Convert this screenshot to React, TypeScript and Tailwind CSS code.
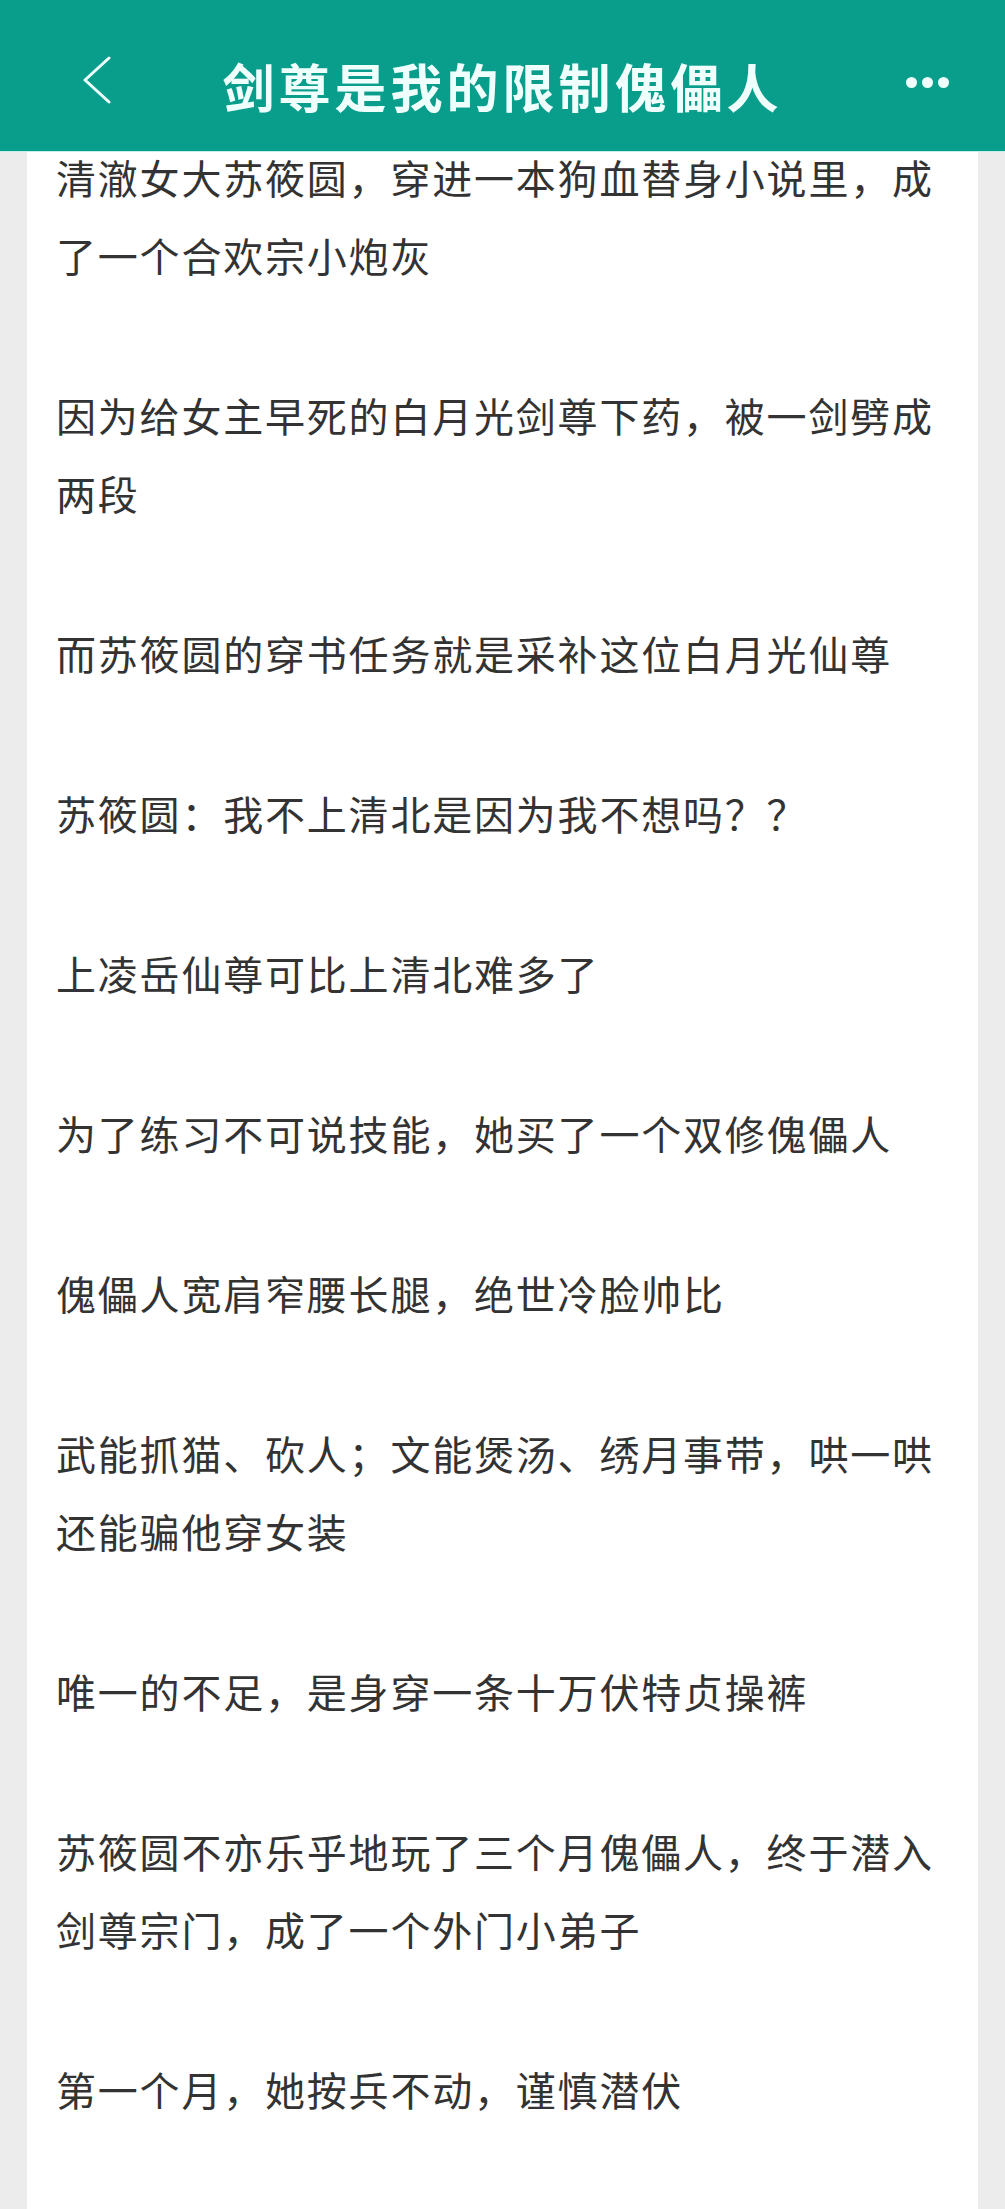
const paragraphs: string[][] = [
  ['清澈女大苏筱圆，穿进一本狗血替身小说里，成', '了一个合欢宗小炮灰'],
  ['因为给女主早死的白月光剑尊下药，被一剑劈成', '两段'],
  ['而苏筱圆的穿书任务就是采补这位白月光仙尊'],
  ['苏筱圆：我不上清北是因为我不想吗？？'],
  ['上凌岳仙尊可比上清北难多了'],
  ['为了练习不可说技能，她买了一个双修傀儡人'],
  ['傀儡人宽肩窄腰长腿，绝世冷脸帅比'],
  ['武能抓猫、砍人；文能煲汤、绣月事带，哄一哄', '还能骗他穿女装'],
  ['唯一的不足，是身穿一条十万伏特贞操裤'],
  ['苏筱圆不亦乐乎地玩了三个月傀儡人，终于潜入', '剑尊宗门，成了一个外门小弟子'],
  ['第一个月，她按兵不动，谨慎潜伏'],
];

function Header() {
  return (
    <div className="fixed top-0 inset-x-0 z-10 h-[152px] bg-[#099e8c] border-b border-[#c4f0e9] grid grid-cols-[1fr_auto_1fr] items-center pt-[20px]">
      <div className="flex pl-[82px] -mt-[12px]">
        <svg width="30" height="48" viewBox="0 0 30 48" fill="none">
          <path d="M27 2 L3 24 L27 46" stroke="#effffc" strokeWidth="3" strokeLinecap="round" strokeLinejoin="round" />
        </svg>
      </div>
      <h1
        className="text-center text-[52px] font-bold text-[#effffc] tracking-[4px] leading-none"
        style={{ fontFamily: '"Noto Sans CJK SC", sans-serif' }}
      >
        剑尊是我的限制傀儡人
      </h1>
      <div className="flex justify-end items-center gap-[5px] pr-[56px] -mt-[6px]">
        <span className="w-[11px] h-[11px] rounded-full bg-[#effffc]" />
        <span className="w-[11px] h-[11px] rounded-full bg-[#effffc]" />
        <span className="w-[11px] h-[11px] rounded-full bg-[#effffc]" />
      </div>
    </div>
  );
}

export default function App() {
  return (
    <div className="min-h-[2209px] bg-[#ececec] px-[27px]">
      <Header />
      <div
        className="bg-white min-h-[2209px] pt-[138px] pl-[29px] pr-[20px] text-[40px] leading-[78px] tracking-[1.8px] text-[#333333]"
        style={{ fontFamily: '"Noto Sans CJK SC", sans-serif' }}
      >
        {paragraphs.map((lines, i) => (
          <p key={i} className="mb-[82px]">
            {lines.map((line, j) => (
              <span key={j} className="block whitespace-nowrap">
                {line}
              </span>
            ))}
          </p>
        ))}
      </div>
    </div>
  );
}
